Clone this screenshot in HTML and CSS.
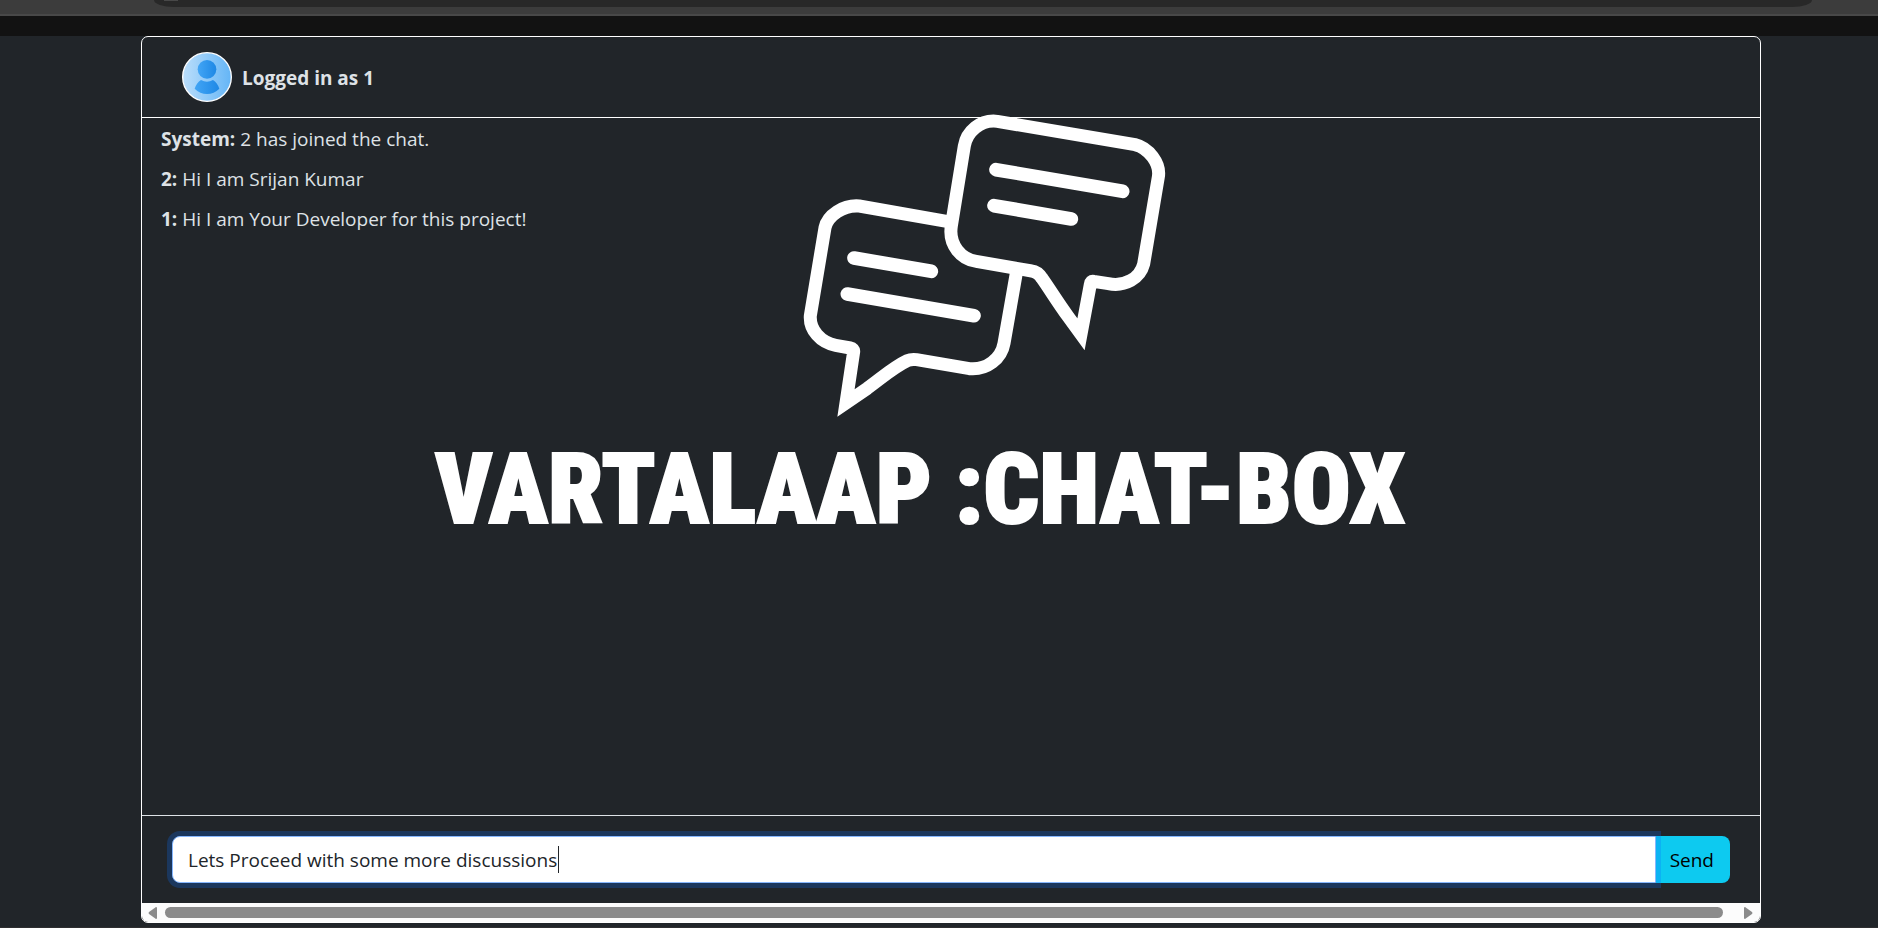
FILE: index.html
```html
<!DOCTYPE html>
<html lang="en">
<head>
<meta charset="utf-8">
<title>Vartalaap</title>
<link rel="stylesheet" href="styles.css">
</head>
<body>
<div class="toolbar"><div class="address"><span class="address-icon"></span></div></div>
<div class="strip"></div>
<main class="chat">
  <header class="chat-header">
    <svg class="avatar" viewBox="0 0 150 150" role="img" aria-label="User">
      <defs>
        <linearGradient id="sky"><stop offset="0" stop-color="#bbdefb"/><stop offset="1" stop-color="#64b5f6"/></linearGradient>
        <linearGradient id="person"><stop offset="0" stop-color="#42a5f5"/><stop offset="1" stop-color="#1e88e5"/></linearGradient>
      </defs>
      <circle cx="75" cy="75" r="73" fill="url(#sky)" stroke="#fff" stroke-width="4"/>
      <circle cx="75" cy="52" r="28" fill="url(#person)"/>
      <path d="M57 84Q75 94 93 84Q106 92 112 110Q96 126 75 126Q54 126 38 110Q44 92 57 84Z" fill="url(#person)"/>
    </svg>
    <h1 class="user">Logged in as 1</h1>
  </header>
  <section class="messages">
    <div class="watermark">
      <svg class="bubbles" viewBox="0 0 1200 990" aria-hidden="true">
        <g fill="none" stroke="#fff" stroke-width="39" stroke-linecap="round">
          <path stroke-linecap="butt" d="M500 364L238 318C190 314 143 346 135 383L91 647C88 690 122 727 167 736L211 744Q222 746 221 755L198 909L262 865C310 830 340 802 382 782Q393 777 410 779L568 806C620 811 664 776 672 730L709 519"/>
          <path d="M652 64L1065 134C1106 144 1142 190 1135 231L1091 492C1080 535 1035 561 985 551L941 544Q932 542 931 553L903 703L863 648C835 610 808 566 786 535Q773 515 755 513L589 484C545 478 505 436 514 378L553 138C560 96 600 58 652 64Z"/>
          <path stroke-width="41" d="M648 209L1028 274M642 317L874 357M222 474L454 514M202 582L582 647"/>
        </g>
      </svg>
      <p class="wordmark">VARTALAAP :CHAT-BOX</p>
    </div>
    <p class="message"><b>System:</b> 2 has joined the chat.</p>
    <p class="message"><b>2:</b> Hi I am Srijan Kumar</p>
    <p class="message"><b>1:</b> Hi I am Your Developer for this project!</p>
  </section>
  <form class="composer">
    <div class="entry">
      <input class="field" type="text" aria-label="Message" value="Lets Proceed with some more discussions">
      <span class="caret"></span>
    </div>
    <button class="send" type="button">Send</button>
  </form>
  <div class="scrollbar">
    <svg class="arrow" viewBox="0 0 10 12" aria-hidden="true"><path d="M8 0Q9 0 9 1V11Q9 12 8 12L1 7Q0 6 1 5Z"/></svg>
    <div class="thumb"></div>
    <svg class="arrow" viewBox="0 0 10 12" aria-hidden="true"><path d="M1 0Q0 0 0 1V11Q0 12 1 12L8 7Q9 6 8 5Z"/></svg>
  </div>
</main>
</body>
</html>
```
FILE: styles.css
```css
* { box-sizing: border-box; }
body {
  margin: 0;
  min-height: 100vh;
  display: flex;
  flex-direction: column;
  background: #212529;
  color: #dee2e6;
  font: 19px/30px "Open Sans", "Noto Sans", sans-serif;
  border-bottom: 1px solid #2f2f31;
  overflow: hidden;
}
.toolbar {
  height: 16px;
  padding: 0 66px 0 154px;
  background: #3c3c3c;
  border-bottom: 2px solid #484848;
}
.address {
  height: 7px;
  padding-left: 10px;
  background: #282828;
  border-radius: 0 0 20px 20px / 0 0 7px 7px;
}
.address-icon {
  display: block;
  width: 14px;
  height: 1px;
  background: #484848;
}
.strip { height: 20px; background: #121212; }
.chat {
  flex: 1;
  display: flex;
  flex-direction: column;
  margin: 0 117px 4px 141px;
  border: 1px solid #fff;
  border-radius: 7px;
}
.chat-header {
  display: flex;
  align-items: center;
  gap: 10px;
  padding: 15px 40px;
  border-bottom: 1px solid #fff;
}
.avatar { width: 50px; height: 50px; }
.user { margin: 0; padding-top: 2px; font-size: 19px; line-height: 30px; font-weight: 700; }
.messages {
  flex: 1;
  position: relative;
  display: flex;
  flex-direction: column;
  gap: 10px;
  padding: 6px 19px;
}
.message { margin: 0; position: relative; }
.watermark {
  position: absolute;
  inset: -18px 0 0;
  display: flex;
  flex-direction: column;
  align-items: center;
  padding-right: 62px;
}
.bubbles { width: 400px; height: 330px; margin-left: 120px; }
.wordmark {
  margin: 0;
  color: #fff;
  font: 900 98px/120px "Roboto Condensed", Roboto, sans-serif;
  -webkit-text-stroke: 2px #fff;
  white-space: nowrap;
}
.composer {
  display: flex;
  padding: 20px 30px;
  border-top: 1px solid #dee2e6;
}
.entry { flex: 1; display: flex; position: relative; z-index: 1; }
.field {
  flex: 1;
  min-width: 0;
  padding: 8px 15px 6px;
  border: 1px solid #86b7fe;
  border-radius: 8px 0 0 8px;
  outline: 0;
  background: #fff;
  color: #212529;
  font: inherit;
  line-height: 31px;
  box-shadow: 0 0 0 5px rgba(13, 110, 253, .25);
}
.caret {
  position: absolute;
  top: 10px;
  left: 386px;
  width: 1px;
  height: 27px;
  background: #212529;
}
.send {
  padding: 9px 16px 8px 14px;
  border: 0;
  border-radius: 0 8px 8px 0;
  background: #0dcaf0;
  color: #000;
  font: inherit;
}
.scrollbar {
  height: 19px;
  display: flex;
  align-items: center;
  padding: 0 6px;
  background: #fcfcfc;
  border-radius: 0 0 6px 6px;
}
.arrow { width: 10px; height: 12px; fill: #8b8b8b; }
.thumb {
  flex: 1;
  height: 11px;
  margin: 0 21px 0 7px;
  border-radius: 6px;
  background: #8b8b8b;
}
```
